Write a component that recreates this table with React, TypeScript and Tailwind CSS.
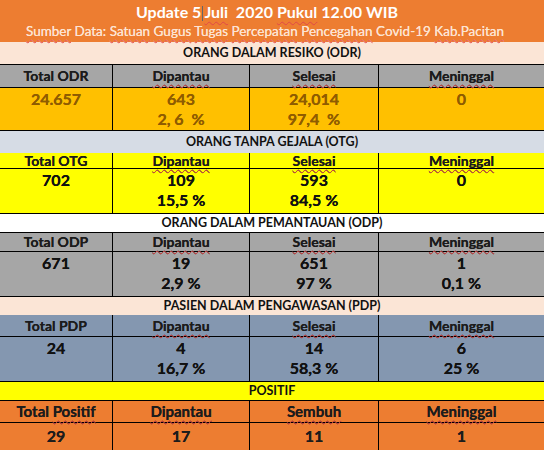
const cols = "grid grid-cols-[113px_137px_129px_1fr]";
const wavy = "font-bold underline decoration-wavy decoration-[#e04848] decoration-1 underline-offset-[3px] [text-decoration-skip-ink:none]";
const wavyReg = "underline decoration-wavy decoration-[#e04848] decoration-1 underline-offset-[3px]";
const thick = "[text-shadow:0_0_0.6px_currentColor]";

type Sec = {
  title: string;
  titleBg: string;
  titleLine?: boolean;
  headBg: string;
  dataBg: string;
  dataText: string;
  total: string;
  cells: [string, string, string];
  pcts: [string, string, string];
  titleH: string;
  headH: string;
  dataH: string;
};

const sections: Sec[] = [
  {
    title: "ORANG DALAM RESIKO (ODR)",
    titleBg: "bg-[#fbe5d6]",
    titleLine: true,
    headBg: "bg-[#a6a6a6]",
    dataBg: "bg-[#ffc000]",
    dataText: "text-[#8f5c00]",
    total: "Total ODR",
    cells: ["24.657", "643", "24,014"],
    pcts: ["", "2, 6  %", "97,4  %"],
    titleH: "h-[23px]",
    headH: "h-[23px]",
    dataH: "h-[43px]",
  },
  {
    title: "ORANG TANPA GEJALA (OTG)",
    titleBg: "bg-[#d6dce5]",
    headBg: "bg-[#ffff00]",
    dataBg: "bg-[#ffff00]",
    dataText: "text-[#111]",
    total: "Total OTG",
    cells: ["702", "109", "593"],
    pcts: ["", "15,5 %", "84,5 %"],
    titleH: "h-[22px]",
    headH: "h-[16px]",
    dataH: "h-[45px]",
  },
  {
    title: "ORANG DALAM PEMANTAUAN (ODP)",
    titleBg: "bg-white",
    titleLine: true,
    headBg: "bg-[#a6a6a6]",
    dataBg: "bg-[#a6a6a6]",
    dataText: "text-[#111]",
    total: "Total ODP",
    cells: ["671", "19", "651"],
    pcts: ["", "2,9 %", "97 %"],
    titleH: "h-[19px]",
    headH: "h-[19px]",
    dataH: "h-[45px]",
  },
  {
    title: "PASIEN DALAM PENGAWASAN (PDP)",
    titleBg: "bg-[#fbe5d6]",
    headBg: "bg-[#8497b0]",
    dataBg: "bg-[#8497b0]",
    dataText: "text-[#111]",
    total: "Total PDP",
    cells: ["24", "4", "14"],
    pcts: ["", "16,7 %", "58,3 %"],
    titleH: "h-[18px]",
    headH: "h-[22px]",
    dataH: "h-[45px]",
  },
];

const deaths = [
  { n: "0", p: "" },
  { n: "0", p: "" },
  { n: "1", p: "0,1 %" },
  { n: "6", p: "25 %" },
];

function Section({ s, i }: { s: Sec; i: number }) {
  return (
    <div>
      <div
        className={`${s.titleBg} ${s.titleH} ${s.titleLine ? "border-b border-black" : ""} flex items-center justify-center text-[12.5px] font-bold text-[#111]`}
      >
        {s.title}
      </div>
      <div className={`${cols} ${s.headBg} ${s.headH} ${thick} border-b border-black text-[14px] font-bold text-[#1c1c1c] leading-none`}>
        <div className="flex items-center justify-center border-r border-black">{s.total}</div>
        <div className="flex items-center justify-center border-r border-black">
          <span className={wavy}>Dipantau</span>
        </div>
        <div className="flex items-center justify-center border-r border-black">
          <span className={wavy}>Selesai</span>
        </div>
        <div className="flex items-center justify-center">
          <span className={wavy}>Meninggal</span>
        </div>
      </div>
      <div className={`${cols} ${s.dataBg} ${s.dataH} ${thick} border-b border-black text-[16px] font-bold ${s.dataText} leading-[20px]`}>
        {[0, 1, 2, 3].map((c) => {
          const n = c === 3 ? deaths[i].n : s.cells[c];
          const p = c === 3 ? deaths[i].p : s.pcts[c];
          return (
            <div
              key={c}
              className={`flex flex-col items-center pt-[1px] whitespace-pre ${c < 3 ? "border-r border-black" : ""}`}
            >
              <span>{n}</span>
              <span>{p}</span>
            </div>
          );
        })}
      </div>
    </div>
  );
}

export default function App() {
  return (
    <div className="w-[544px] h-[450px] overflow-hidden bg-white font-['Lato',sans-serif]">
      <div className="bg-[#ed7d31] h-[42px] flex flex-col items-center pt-[2px]">
        <div className="text-[16px] font-bold text-white leading-[20px] whitespace-pre -ml-[10px]">
          Update 5<span className="inline-block w-px h-[15px] bg-[#666] align-middle mx-px" />
          <span className={wavy}>Juli</span>  2020 <span className={wavy}>Pukul</span> 12.00 WIB
        </div>
        <div className="text-[13.5px] text-[#fde4d2] leading-[18px] [text-shadow:0_0_0.4px_#fde4d2] -ml-[14px]">
          <span className={wavyReg}>Sumber</span> Data: <span className={wavyReg}>Satuan</span>{" "}
          <span className={wavyReg}>Gugus</span> <span className={wavyReg}>Tugas</span>{" "}
          <span className={wavyReg}>Percepatan</span> <span className={wavyReg}>Pencegahan</span> Covid-19{" "}
          <span className={wavyReg}>Kab.Pacitan</span>
        </div>
      </div>
      {sections.map((s, i) => (
        <Section key={s.title} s={s} i={i} />
      ))}
      <div className="bg-[#ffff00] h-[18px] flex items-center justify-center text-[12.5px] font-bold text-[#111]">
        POSITIF
      </div>
      <div className={`${cols} bg-[#ed7d31] h-[23px] ${thick} border-y border-black text-[15px] font-bold text-[#1c1c1c] leading-none`}>
        <div className="flex items-center justify-center border-r border-black">
          Total&nbsp;<span className={wavy}>Positif</span>
        </div>
        <div className="flex items-center justify-center border-r border-black">
          <span className={wavy}>Dipantau</span>
        </div>
        <div className="flex items-center justify-center border-r border-black">
          <span className={wavy}>Sembuh</span>
        </div>
        <div className="flex items-center justify-center">
          <span className={wavy}>Meninggal</span>
        </div>
      </div>
      <div className={`${cols} bg-[#ed7d31] h-[60px] ${thick} text-[16px] font-bold text-[#1c1c1c] leading-[22px]`}>
        {["29", "17", "11", "1"].map((n, c) => (
          <div key={c} className={`flex flex-col items-center pt-[2px] ${c < 3 ? "border-r border-black" : ""}`}>
            <span>{n}</span>
            <span className="pl-[50px]">{c === 0 ? "" : "%"}</span>
          </div>
        ))}
      </div>
    </div>
  );
}
